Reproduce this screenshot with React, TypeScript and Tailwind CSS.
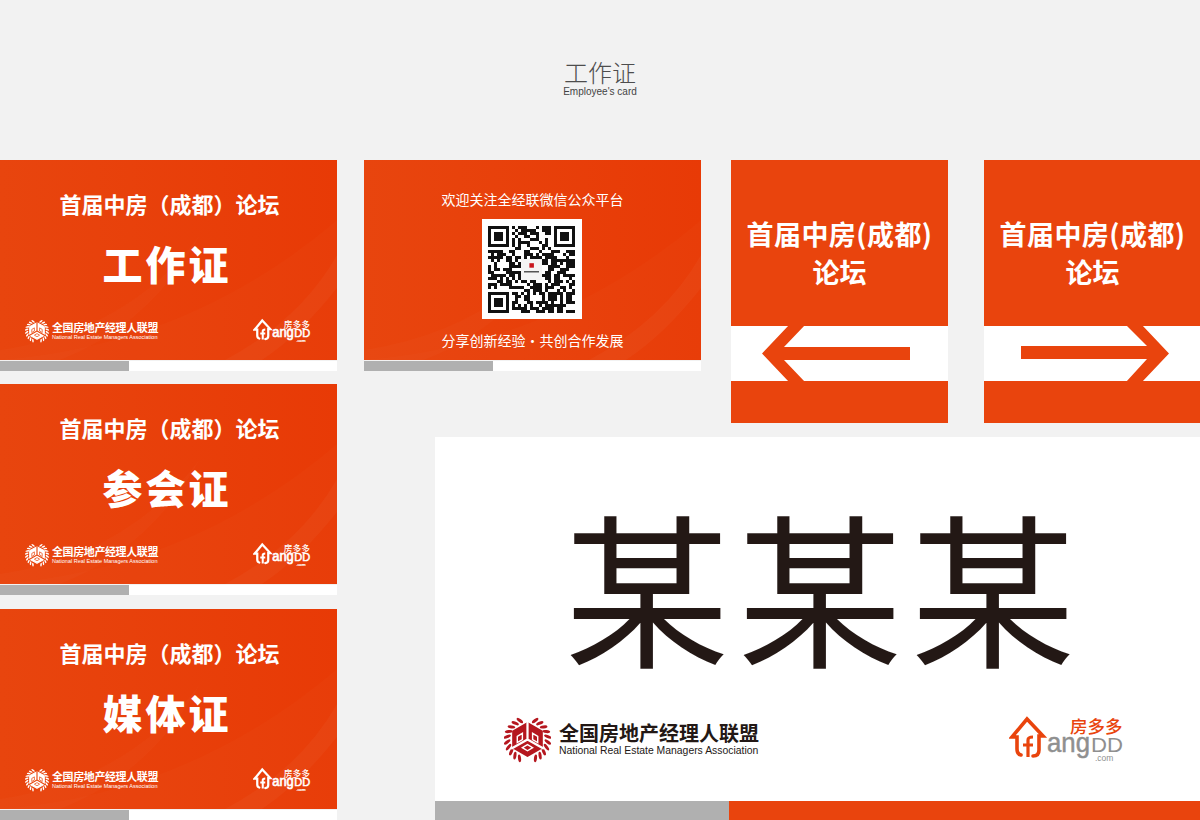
const cjk = "font-['Noto_Sans_CJK_SC',sans-serif]";
const latin = "font-['Liberation_Sans','Noto_Sans_CJK_SC',sans-serif]";

// wreath + hexagon emblem of the association
function Emblem({ fg, bg, size }: { fg: string; bg: string; size: string }) {
  const leaves = [];
  for (let i = 0; i < 10; i++) {
    const a = 22 + i * 15;
    leaves.push(<ellipse key={"r" + i} cx="23" cy="3" rx="1.5" ry="3.8" fill={fg} transform={`rotate(${a} 23 23) rotate(30 23 3)`} />);
    leaves.push(<ellipse key={"l" + i} cx="23" cy="3" rx="1.5" ry="3.8" fill={fg} transform={`rotate(${-a} 23 23) rotate(-30 23 3)`} />);
  }
  return (
    <svg viewBox="0 0 46 46" className={`${size} shrink-0`}>
      {leaves}
      <polygon points="23,7 37,15 37,31 23,39 9,31 9,15" fill={fg} strokeLinejoin="round" stroke={fg} strokeWidth="2" />
      <path d="M23 23 V5 M23 23 L7 32 M23 23 L39 32" stroke={bg} strokeWidth="2.2" />
      <path d="M13 20 L18 17 V23 L13 26 Z M33 20 L28 17 V23 L33 26 Z M18 31 L23 28 L28 31 L23 34 Z" fill="none" stroke={bg} strokeWidth="1.4" />
    </svg>
  );
}

// house mark, 房多多, angDD and .com
function FangLogo({ house, word, top, size, extra }: { house: string; word: string; top: string; size: string; extra: number }) {
  return (
    <svg viewBox="0 -2 115 50" className={size}>
      <path d="M12 39 Q8 38 8 33 V21 H3 L18 3 L34 20 H30 V34 Q30 40 24 40" fill="none" stroke={house} strokeWidth={3.6 + extra} strokeLinecap="round" />
      <path d="M19 41 V24 Q19 21 24 21 M14 29 H24" fill="none" stroke={house} strokeWidth={3.2 + extra} />
      <text x="38" y="36" fontFamily="Liberation Sans" fontSize="28" fill={word} stroke={word} strokeWidth={0.5 + extra} textLength="43" lengthAdjust="spacingAndGlyphs">ang</text>
      <text x="82" y="36" fontFamily="Liberation Sans" fontSize="21" fill={word} stroke={word} strokeWidth={extra} textLength="32" lengthAdjust="spacingAndGlyphs">DD</text>
      <text x="61" y="17" fontFamily="Noto Sans CJK SC" fontSize="17.5" fontWeight="500" fill={top}>房多多</text>
      <text x="86" y="45" fontFamily="Liberation Sans" fontSize="8.5" fill={word} stroke={word} strokeWidth={extra / 2}>.com</text>
    </svg>
  );
}

function Swoosh() {
  return (
    <svg viewBox="0 0 337 200" className="absolute inset-0 w-full h-full" preserveAspectRatio="none">
      <path d="M0 200 Q190 185 337 60 V200 Z" fill="#fff" opacity="0.015" />
      <path d="M225 200 Q300 160 337 95 V128 Q300 175 262 200 Z" fill="#fff" opacity="0.03" />
      <path d="M0 190 Q130 170 200 75 Q150 165 60 200 H0 Z" fill="#fff" opacity="0.018" />
    </svg>
  );
}

function Strip() {
  return (
    <div className="flex h-[10px] mt-px bg-white">
      <div className="w-[129px] bg-[#b0b0b0]" />
    </div>
  );
}

function BadgeCard({ kind }: { kind: string }) {
  return (
    <div className="w-[337px] h-[211px] shrink-0">
      <div className="relative h-[200px] overflow-hidden bg-gradient-to-r from-[#e8450e] to-[#e83a06]">
        <Swoosh />
        <div className="relative flex flex-col items-center">
          <div className={`${cjk} mt-[26px] ml-[2px] h-[34px] text-[22px] leading-[34px] font-bold text-white`}>首届中房（成都）论坛</div>
          <div className={`${cjk} mt-[15px] ml-[-3px] h-[56px] text-[40px] leading-[56px] font-black tracking-[3px] text-white`}>{kind}</div>
        </div>
        <div className="absolute left-[25px] right-[26px] top-[158px] flex justify-between items-center">
          <div className="flex items-center gap-[3px]">
            <Emblem fg="#fff" bg="#e9480f" size="w-[24px] h-[24px]" />
            <div className="text-white">
              <div className={`${cjk} text-[11px] leading-[13px] font-bold tracking-[-0.4px]`}>全国房地产经理人联盟</div>
              <div className={`${latin} text-[5.5px] leading-[7px]`}>National Real Estate Managers Association</div>
            </div>
          </div>
          <FangLogo house="#fff" word="#fff" top="#fff" size="w-[58px] h-[25px]" extra={0.9} />
        </div>
      </div>
      <Strip />
    </div>
  );
}

function QrCode() {
  const n = 29;
  let seed = 20160;
  const cells: string[] = [];
  const isFinder = (x: number, y: number) => (x < 8 && y < 8) || (x > n - 9 && y < 8) || (x < 8 && y > n - 9);
  for (let y = 0; y < n; y++) {
    for (let x = 0; x < n; x++) {
      seed = (seed * 1103515245 + 12345) & 0x7fffffff;
      const inLogo = x > 10 && x < 18 && y > 10 && y < 18;
      if (!isFinder(x, y) && !inLogo && (seed >> 16) % 100 < 58) cells.push(`M${x} ${y}h1v1h-1z`);
    }
  }
  const finder = (x: number, y: number) => `M${x} ${y}h7v7h-7z M${x + 1} ${y + 1}v5h5v-5z M${x + 2} ${y + 2}h3v3h-3z`;
  return (
    <div className="w-[100px] h-[100px] bg-white flex items-center justify-center">
      <svg viewBox="0 0 29 29" className="w-[87px] h-[87px]">
        <path d={cells.join("")} fill="#111" />
        <path d={`${finder(0, 0)} ${finder(22, 0)} ${finder(0, 22)}`} fill="#111" fillRule="evenodd" />
        <rect x="11" y="11" width="7" height="7" fill="#f4f4f4" />
        <rect x="13.8" y="12.4" width="1.5" height="1.5" fill="#c8161d" />
        <rect x="12" y="15" width="5" height="0.5" fill="#555" />
      </svg>
    </div>
  );
}

function QrCard() {
  return (
    <div className="w-[337px] h-[211px]">
      <div className="relative h-[200px] overflow-hidden bg-gradient-to-r from-[#e8450e] to-[#e83a06]">
        <Swoosh />
        <div className="relative flex flex-col items-center">
          <div className={`${cjk} mt-[28px] h-[22px] text-[14px] leading-[22px] text-white`}>欢迎关注全经联微信公众平台</div>
          <div className="mt-[9px] ml-[-2px]"><QrCode /></div>
          <div className={`${cjk} mt-[10px] h-[22px] text-[14px] leading-[22px] text-white`}>分享创新经验・共创合作发展</div>
        </div>
      </div>
      <Strip />
    </div>
  );
}

function DirectionSign({ points }: { points: string }) {
  return (
    <div className="w-[217px] h-[263px] shrink-0 flex flex-col bg-[#e9440d]">
      <div className="h-[166px] pt-[55px] flex flex-col items-center">
        <div className={`${cjk} text-[27px] leading-[38px] font-bold tracking-[0.45px] text-white whitespace-nowrap`}>首届中房(成都)</div>
        <div className={`${cjk} text-[27px] leading-[38px] font-bold text-white`}>论坛</div>
      </div>
      <div className="h-[55px] bg-white">
        <svg viewBox="0 0 217 55" className="w-[217px] h-[55px]">
          <polygon points={points} fill="#e9440d" />
        </svg>
      </div>
    </div>
  );
}

function NameCard() {
  return (
    <div className="ml-[71px] mt-[14px] w-[765px] h-[383px] flex flex-col bg-white">
      <div className="h-[364px] flex flex-col">
        <div className={`${cjk} mt-[47px] h-[200px] pl-[13px] text-center text-[165px] leading-[200px] tracking-[8px] text-[#231815]`}>某某某</div>
        <div className="mt-[30px] pl-[69px] pr-[76px] flex justify-between items-center">
          <div className="flex items-center gap-[8px]">
            <Emblem fg="#b5171f" bg="#fff" size="w-[47px] h-[47px]" />
            <div className="text-[#231815]">
              <div className={`${cjk} text-[20px] leading-[23px] font-bold whitespace-nowrap`}>全国房地产经理人联盟</div>
              <div className={`${latin} text-[10.4px] leading-[13px] whitespace-nowrap`}>National Real Estate Managers Association</div>
            </div>
          </div>
          <FangLogo house="#e9440d" word="#8f8f8f" top="#e9440d" size="w-[115px] h-[50px]" extra={0} />
        </div>
      </div>
      <div className="flex h-[19px] bg-[#e9440d]">
        <div className="w-[294px] bg-[#b0b0b0]" />
      </div>
    </div>
  );
}

export default function App() {
  return (
    <div className="w-[1200px] h-[820px] overflow-hidden bg-[#f2f2f2]">
      <div className="h-[160px] pt-[57px] flex flex-col items-center">
        <div className={`${cjk} text-[24px] leading-[29px] font-light text-[#4d4d4d]`}>工作证</div>
        <div className={`${latin} text-[10px] leading-[12px] text-[#444]`}>Employee's card</div>
      </div>
      <div className="flex">
        <div className="w-[337px] flex flex-col gap-[13px]">
          <BadgeCard kind="工作证" />
          <BadgeCard kind="参会证" />
          <div className="mt-px"><BadgeCard kind="媒体证" /></div>
        </div>
        <div className="ml-[27px] flex-1 flex flex-col">
          <div className="flex">
            <QrCard />
            <div className="ml-[30px]">
              <DirectionSign points="31,27.5 58,-1 74,-1 53,21 179,21 179,34 53,34 74,56 58,56" />
            </div>
            <div className="ml-[36px]">
              <DirectionSign points="37,20 163,20 142,-1 158,-1 185,27.5 158,56 142,56 163,33 37,33" />
            </div>
          </div>
          <NameCard />
        </div>
      </div>
    </div>
  );
}
